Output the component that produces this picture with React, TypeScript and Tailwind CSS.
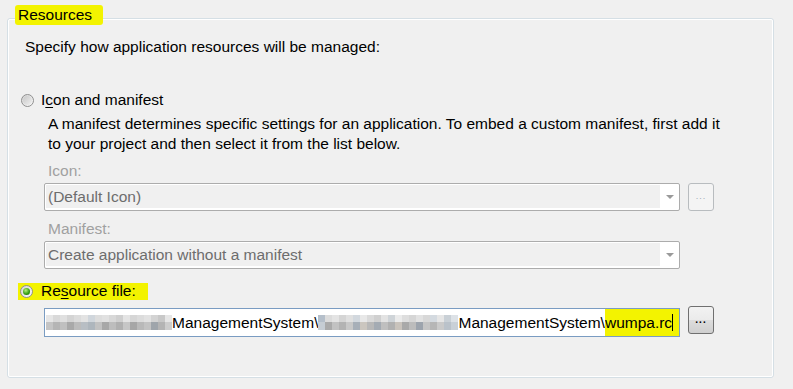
const blurA1 = [
  'bg-[#e6e6e6]', 'bg-[#d9d9d9]', 'bg-[#e0e0e0]', 'bg-[#d4d4d4]', 'bg-[#dcdcdc]', 'bg-[#e3e3e3]',
  'bg-[#d0d6dc]', 'bg-[#dddddd]', 'bg-[#e1e1e1]', 'bg-[#d8d8d8]', 'bg-[#cfcfcf]', 'bg-[#e4e4e4]',
  'bg-[#d6d6d6]', 'bg-[#dcdcdc]', 'bg-[#e2e2e2]', 'bg-[#d3d3d3]', 'bg-[#c8c8c8]', 'bg-[#e6e6e6]',
]
const blurA2 = [
  'bg-[#c4c4c4]', 'bg-[#b5b5b5]', 'bg-[#c0c0c0]', 'bg-[#a9a9a9]', 'bg-[#bcbcbc]', 'bg-[#b8bec4]',
  'bg-[#aeb6bd]', 'bg-[#c2c2c2]', 'bg-[#a8a8a8]', 'bg-[#bdbdbd]', 'bg-[#b0b0b0]', 'bg-[#c6c6c6]',
  'bg-[#a6a6a6]', 'bg-[#b9b9b9]', 'bg-[#c3c3c3]', 'bg-[#9fa5ab]', 'bg-[#b4b4b4]', 'bg-[#cdcdcd]',
]
const blurB1 = [
  'bg-[#b5bfca]', 'bg-[#dcdcdc]', 'bg-[#e4e4e4]', 'bg-[#d5d5d5]', 'bg-[#e0e0e0]', 'bg-[#d2d8de]',
  'bg-[#e8e8e8]', 'bg-[#dadada]', 'bg-[#d0d0d0]', 'bg-[#e3e3e3]', 'bg-[#cfd4d8]', 'bg-[#ebebeb]',
  'bg-[#dedede]', 'bg-[#d6d6d6]', 'bg-[#e2e2e2]', 'bg-[#d8d8d8]', 'bg-[#d4dae0]', 'bg-[#e6e6e6]',
  'bg-[#c9d0d6]', 'bg-[#dde2e7]',
]
const blurB2 = [
  'bg-[#c6cdd4]', 'bg-[#aaaaaa]', 'bg-[#c2c2c2]', 'bg-[#b3b3b3]', 'bg-[#c8c8c8]', 'bg-[#a7afb8]',
  'bg-[#cbc6bf]', 'bg-[#b8b8b8]', 'bg-[#a4abb3]', 'bg-[#bfbfbf]', 'bg-[#b1b1b1]', 'bg-[#c9c3bc]',
  'bg-[#a9a9a9]', 'bg-[#bcbcbc]', 'bg-[#9da4ad]', 'bg-[#c5c5c5]', 'bg-[#b6b6b6]', 'bg-[#cacaca]',
  'bg-[#bac2ca]', 'bg-[#c9d0d7]',
]

function Blur({ top, bottom }: { top: string[]; bottom: string[] }) {
  return (
    <div className="flex flex-col self-center shrink-0">
      <div className="flex">
        {top.map((c, i) => (
          <div key={i} className={`w-[7px] h-[7px] ${c}`} />
        ))}
      </div>
      <div className="flex">
        {bottom.map((c, i) => (
          <div key={i} className={`w-[7px] h-[8px] ${c}`} />
        ))}
      </div>
    </div>
  )
}

function Radio({ checked }: { checked?: boolean }) {
  return (
    <div className="w-[13px] h-[13px] shrink-0 rounded-full border border-[#8f8f8f] bg-gradient-to-br from-[#d4d4d4] to-[#fafafa] flex items-center justify-center">
      {checked ? (
        <div className="w-[7px] h-[7px] rounded-full bg-[radial-gradient(circle_at_40%_35%,#b6f07a,#2f9a0f_60%,#1c5e08)]" />
      ) : (
        <div className="w-[9px] h-[9px] rounded-full bg-gradient-to-br from-[#c8c8c8] to-[#f0f0f0]" />
      )}
    </div>
  )
}

function Combo({ text }: { text: string }) {
  return (
    <div className="flex w-[636px] h-[28px] border border-[#acacac] rounded-[2px] bg-white pt-[1px] pb-[2px] pl-[1px]">
      <div className="flex-1 bg-[#f0f0f0] flex items-center pl-[2px] text-[#6d6d6d]">{text}</div>
      <div className="w-[19px] flex items-center justify-center">
        <div className="w-0 h-0 border-l-[4px] border-r-[4px] border-t-[4px] border-l-transparent border-r-transparent border-t-[#9a9a9a]" />
      </div>
    </div>
  )
}

export default function App() {
  return (
    <div
      className="w-[793px] h-[389px] bg-[#f0f0f0] text-[15.5px] text-black pt-[18px] pl-[7px] overflow-hidden"
      style={{ fontFamily: '"Liberation Sans", Arial, sans-serif' }}
    >
      <div className="relative w-[767px] h-[360px] border border-[#d5dfe5] rounded-[3px]">
        {/* Legend with highlighter */}
        <div className="absolute left-[7px] -top-[14px] w-[88px] h-[20px] bg-[#f3f300] rounded-[3px] pl-[3px] leading-[20px]">
          Resources
        </div>

        <div className="h-full border border-white rounded-[2px] pl-[16px] pt-[17px] flex flex-col">
          <div className="leading-[20px]">Specify how application resources will be managed:</div>

          {/* Icon and manifest */}
          <div className="mt-[33px] h-[20px] flex items-center -ml-[4px]">
            <Radio />
            <span className="ml-[7px]">
              I<span className="underline underline-offset-2">c</span>on and manifest
            </span>
          </div>
          <div className="ml-[23px] mt-[4px] leading-[20px] whitespace-nowrap">
            A manifest determines specific settings for an application. To embed a custom manifest, first add it
            <br />
            to your project and then select it from the list below.
          </div>

          <div className="ml-[19px] flex flex-col">
            <div className="mt-[7px] leading-[20px] text-[#a0a0a0] pl-[4px]">Icon:</div>
            <div className="mt-[2px] flex items-center gap-[8px]">
              <Combo text="(Default Icon)" />
              <div className="w-[26px] h-[28px] border border-[#b8bcbf] rounded-[3px] bg-[#f4f4f4] flex items-end justify-center pb-[9px]">
                <span className="text-[9px] leading-none text-[#a0a8b8] tracking-[1px]">...</span>
              </div>
            </div>

            <div className="mt-[8px] leading-[20px] text-[#a0a0a0] pl-[4px]">Manifest:</div>
            <div className="mt-[2px] flex">
              <Combo text="Create application without a manifest" />
            </div>
          </div>

          {/* Resource file */}
          <div className="mt-[12px] h-[20px] flex items-center -ml-[5px]">
            <div className="flex items-center h-[17px] w-[130px] bg-[#f3f300] pl-[2px] -ml-[2px]">
              <Radio checked />
              <span className="ml-[8px]">
                Re<span className="underline underline-offset-2">s</span>ource file:
              </span>
            </div>
          </div>

          <div className="ml-[19px] mt-[7px] flex items-start gap-[8px]">
            <div className="w-[636px] h-[29px] border border-[#7a9cc2] bg-white flex items-stretch overflow-hidden pl-[1px] whitespace-nowrap">
              <Blur top={blurA1} bottom={blurA2} />
              <span className="self-center shrink-0">ManagementSystem\</span>
              <Blur top={blurB1} bottom={blurB2} />
              <span className="self-center shrink-0">ManagementSystem\</span>
              <div className="bg-[#f3f300] flex items-center flex-1 overflow-hidden">
                <span className="shrink-0">wumpa.rc</span>
                <div className="w-[1px] h-[17px] bg-black shrink-0" />
              </div>
            </div>
            <div className="-mt-[2px] w-[26px] h-[28px] border border-[#707070] rounded-[3px] bg-[linear-gradient(#f2f2f2_0%,#ebebeb_50%,#dddddd_51%,#cfcfcf_100%)] flex items-end justify-center pb-[8px]">
              <span className="text-[10px] leading-none font-bold tracking-[1px]">...</span>
            </div>
          </div>
        </div>
      </div>
    </div>
  )
}
